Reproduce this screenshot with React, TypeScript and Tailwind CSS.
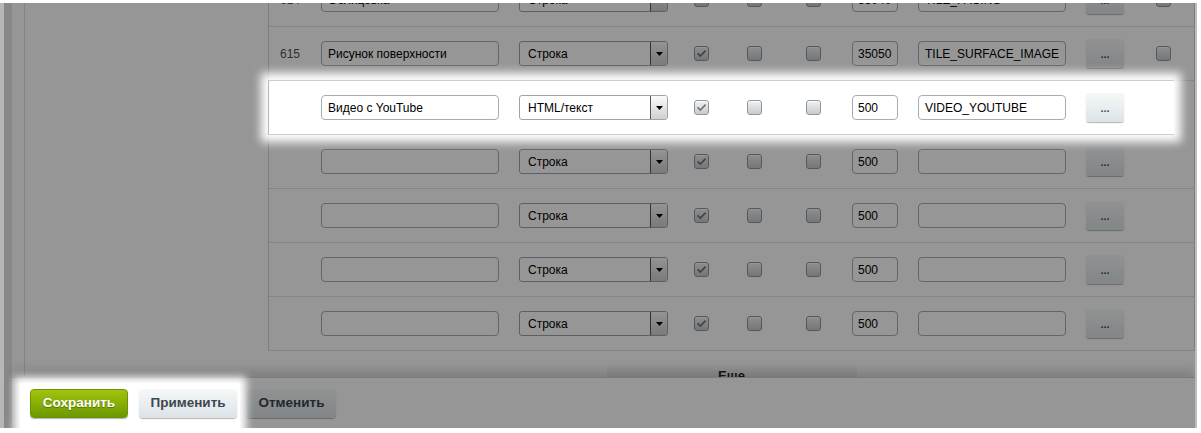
import React from "react";

type Row = {
  num?: string;
  name: string;
  type: string;
  cbs: [boolean, boolean, boolean];
  sort: string;
  code: string;
  last?: boolean;
  hl?: boolean;
};

const rows: Row[] = [
  { num: "614", name: "Облицовка", type: "Строка", cbs: [true, false, false], sort: "35040", code: "TILE_FACING", last: true },
  { num: "615", name: "Рисунок поверхности", type: "Строка", cbs: [true, false, false], sort: "35050", code: "TILE_SURFACE_IMAGE", last: true },
  { name: "Видео с YouTube", type: "HTML/текст", cbs: [true, false, false], sort: "500", code: "VIDEO_YOUTUBE", hl: true },
  { name: "", type: "Строка", cbs: [true, false, false], sort: "500", code: "" },
  { name: "", type: "Строка", cbs: [true, false, false], sort: "500", code: "" },
  { name: "", type: "Строка", cbs: [true, false, false], sort: "500", code: "" },
  { name: "", type: "Строка", cbs: [true, false, false], sort: "500", code: "" },
];

function Check({ checked }: { checked: boolean }) {
  return (
    <div className="w-[15px] h-[15px] shrink-0 rounded-[3px] border border-[#8e969c] bg-linear-to-b from-[#f0f2f3] to-[#c6cbcf] flex items-center justify-center shadow-[inset_0_1px_0_#ffffff]">
      {checked && (
        <svg width="11" height="9" viewBox="0 0 11 9">
          <path d="M1.6 4.4 L4.3 7.1 L9.6 1.6" fill="none" stroke="#6b7379" strokeWidth="1.6" />
        </svg>
      )}
    </div>
  );
}

function Field({ value, w, pl }: { value: string; w: string; pl: string }) {
  return (
    <div className={`${w} ${pl} h-[25px] shrink-0 rounded-[4px] border border-[#a6adb2] bg-white flex items-center text-[12px] text-black whitespace-nowrap overflow-hidden`}>
      {value}
    </div>
  );
}

function Select({ value }: { value: string }) {
  return (
    <div className="ml-[20px] w-[149px] h-[25px] shrink-0 rounded-[3px] border border-[#9ea4a9] bg-white flex overflow-hidden">
      <div className="flex-1 flex items-center pl-[8px] text-[12px] text-black whitespace-nowrap">{value}</div>
      <div className="w-[17px] border-l border-[#555555] bg-linear-to-b from-[#fbfbfb] to-[#d0d0d0] flex items-center justify-center">
        <svg width="7" height="4" viewBox="0 0 7 4">
          <path d="M0 0 H7 L3.5 4 Z" fill="#000" />
        </svg>
      </div>
    </div>
  );
}

function TableRow({ r }: { r: Row }) {
  return (
    <div
      className={
        r.hl
          ? "relative z-30 -mt-px -ml-px mr-[20px] h-[55px] flex items-center pl-[11px] bg-white border-y border-l border-y-[#cdcdcd] border-l-[#b8b8b8] shadow-[0_0_9px_7px_#ffffff]"
          : "h-[54px] flex items-center pl-[11px] border-b border-[#e2e2e2]"
      }
    >
      <div className="w-[41px] shrink-0 text-[12px] text-[#4c564c]">{r.num ?? ""}</div>
      <Field value={r.name} w="w-[178px]" pl="pl-[6px]" />
      <Select value={r.type} />
      <div className="ml-[26px]"><Check checked={r.cbs[0]} /></div>
      <div className="ml-[38px]"><Check checked={r.cbs[1]} /></div>
      <div className="ml-[44px]"><Check checked={r.cbs[2]} /></div>
      <div className="ml-[31px]"><Field value={r.sort} w="w-[46px]" pl="pl-[5px]" /></div>
      <div className="ml-[20px]"><Field value={r.code} w="w-[148px]" pl="pl-[6px]" /></div>
      <div className="ml-[20px] w-[38px] h-[29px] shrink-0 rounded-[3px] bg-linear-to-b from-[#f6f8f9] to-[#dde4e7] shadow-[0_1px_1px_rgba(0,0,0,0.3)] flex items-center justify-center text-[#3a5065] text-[11px] font-bold leading-none pt-[1px]">
        ...
      </div>
      {r.last && (
        <div className="ml-[32px]"><Check checked={false} /></div>
      )}
    </div>
  );
}

export default function App() {
  return (
    <div className="w-[1201px] h-[433px] bg-white pt-[3px] overflow-hidden font-['Liberation_Sans',Arial,sans-serif]">
      <div className="w-[1197px] h-[425px] flex border-l-4 border-r-2 border-l-[#b7b7b7] border-r-[#bdbdbd] overflow-hidden">
        <div className="relative w-[1191px] h-[425px] flex">
          {/* left strip */}
          <div className="w-[8px] shrink-0 bg-[#e8e8e8]" />
          {/* main column */}
          <div className="w-[1183px] flex flex-col">
            <div className="h-[374px] flex overflow-hidden bg-white">
              <div className="w-[12px] shrink-0" />
              <div className="w-px shrink-0 bg-[#dedede]" />
              <div className="w-[243px] shrink-0" />
              <div className="w-[927px] shrink-0 flex flex-col -mt-[30px]">
                <div className="border-x border-[#d4d4d4]">
                  {rows.map((r, i) => (
                    <TableRow key={i} r={r} />
                  ))}
                </div>
                <div className="mx-auto mt-[11px] w-[250px] h-[30px] shrink-0 rounded-t-[3px] bg-linear-to-b from-[#ffffff] to-[#e4e4e4] text-center pt-[4px] text-[13px] font-bold text-[#2b2b2b]">
                  Еще
                </div>
              </div>
            </div>
            {/* footer */}
            <div className="relative h-[51px] flex items-start pl-[8px] pt-[5px] bg-white border-t border-[#d2d2d2] shadow-[0_-7px_10px_rgba(0,0,0,0.15)]">
              <div className="relative z-30 h-[46px] flex gap-[11px] pl-[10px] pr-[3px] pt-[6px] bg-white shadow-[0_0_8px_6px_#ffffff]">
                <div className="w-[98px] h-[29px] rounded-[4px] border border-[#6d9400] bg-linear-to-b from-[#a2c40e] to-[#6c9900] shadow-[0_1px_1px_rgba(0,0,0,0.3)] flex items-center justify-center text-white text-[13.5px] font-bold [text-shadow:0_1px_1px_rgba(0,0,0,0.35)]">
                  Сохранить
                </div>
                <div className="w-[98px] h-[29px] rounded-[4px] bg-linear-to-b from-[#f6f8f9] to-[#dce3e6] shadow-[0_1px_1px_rgba(0,0,0,0.3)] flex items-center justify-center text-[#3d4850] text-[13.5px] font-bold">
                  Применить
                </div>
              </div>
              <div className="ml-[7px] mt-[6px] w-[89px] h-[29px] rounded-[4px] bg-linear-to-b from-[#f6f8f9] to-[#dce3e6] shadow-[0_1px_1px_rgba(0,0,0,0.3)] flex items-center justify-center text-[#3d4850] text-[13.5px] font-bold">
                Отменить
              </div>
            </div>
          </div>
          {/* dimming overlay */}
          <div className="absolute inset-0 z-20 bg-black/[0.41] pointer-events-none" />
        </div>
      </div>
    </div>
  );
}
